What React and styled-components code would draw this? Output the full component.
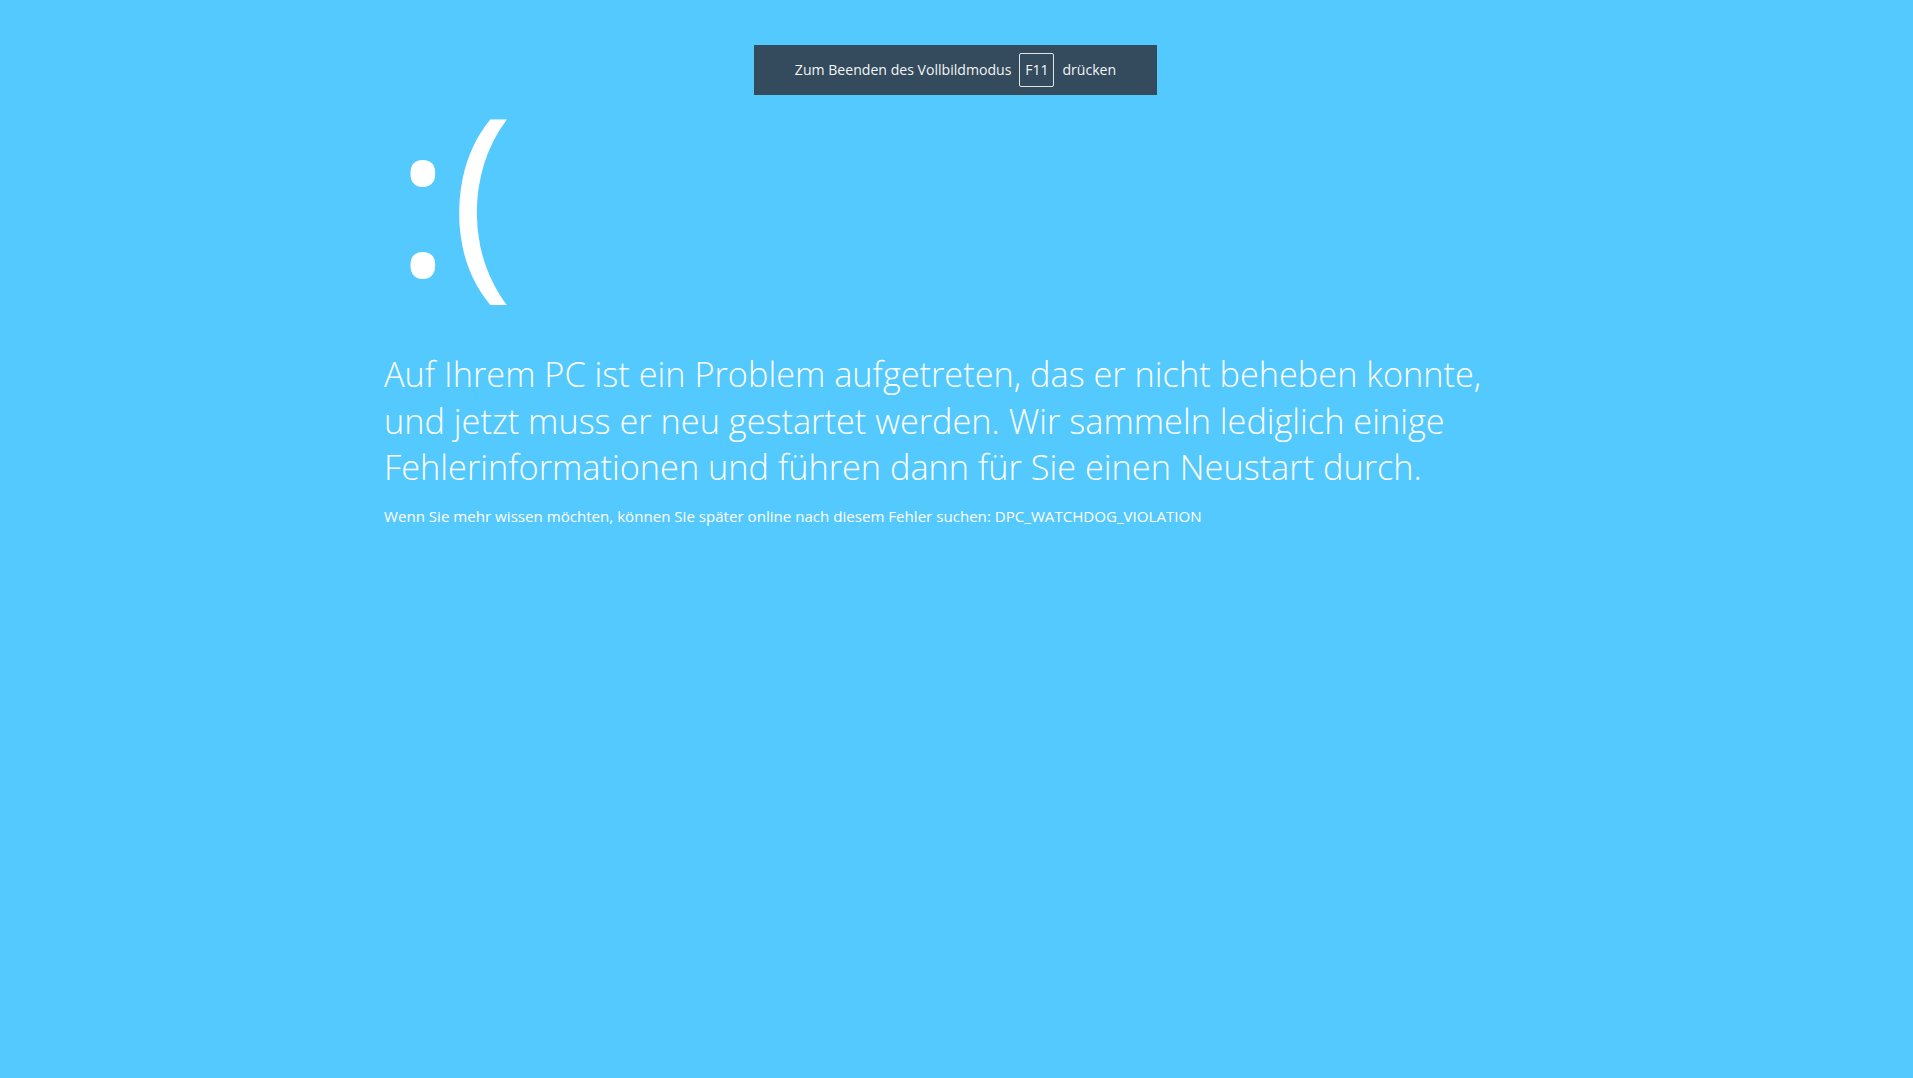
import React from "react";
import styled, { createGlobalStyle } from "styled-components";

const Global = createGlobalStyle`
  html, body { margin: 0; height: 100%; background: #54c9fe; }
  #root { min-height: 100%; }
`;

const Screen = styled.main`
  position: relative;
  min-height: 1078px;
  background: #54c9fe;
  color: #ffffff;
  font-family: "Open Sans", "Noto Sans", sans-serif;
  padding: 83px 0 0 384px;
  box-sizing: border-box;
`;

const Notice = styled.div`
  position: absolute;
  top: 45px;
  left: calc(50% - 202.5px);
  width: 403px;
  height: 50px;
  box-sizing: border-box;
  padding-bottom: 1px;
  background: #334b5c;
  display: flex;
  align-items: center;
  justify-content: center;
  gap: 8px;
  font-size: 14.1px;
  color: #f2f4f5;
`;

const Key = styled.span`
  display: flex;
  align-items: center;
  justify-content: center;
  width: 35px;
  height: 34px;
  box-sizing: border-box;
  border: 1px solid rgba(255, 255, 255, 0.85);
  border-radius: 2px;
`;

const Face = styled.div`
  font-size: 212px;
  line-height: 212px;
  font-weight: 400;
  padding-left: 11px;
`;

const Mouth = styled.span`
  vertical-align: 5px;
`;

const Message = styled.p`
  margin: 51px 0 0;
  font-size: 34.3px;
  line-height: 46.5px;
  font-weight: 300;
`;

const Detail = styled.p`
  margin: 15px 0 0;
  font-size: 15.1px;
  font-weight: 400;
`;

export default function App() {
  return (
    <>
      <Global />
      <Screen>
        <Notice>
          <span>Zum Beenden des Vollbildmodus</span>
          <Key>F11</Key>
          <span>drücken</span>
        </Notice>
        <Face>
          :<Mouth>(</Mouth>
        </Face>
        <Message>
          Auf Ihrem PC ist ein Problem aufgetreten, das er nicht beheben konnte,
          <br />
          und jetzt muss er neu gestartet werden. Wir sammeln lediglich einige
          <br />
          Fehlerinformationen und führen dann für Sie einen Neustart durch.
        </Message>
        <Detail>
          Wenn Sie mehr wissen möchten, können Sie später online nach diesem Fehler suchen: DPC_WATCHDOG_VIOLATION
        </Detail>
      </Screen>
    </>
  );
}
